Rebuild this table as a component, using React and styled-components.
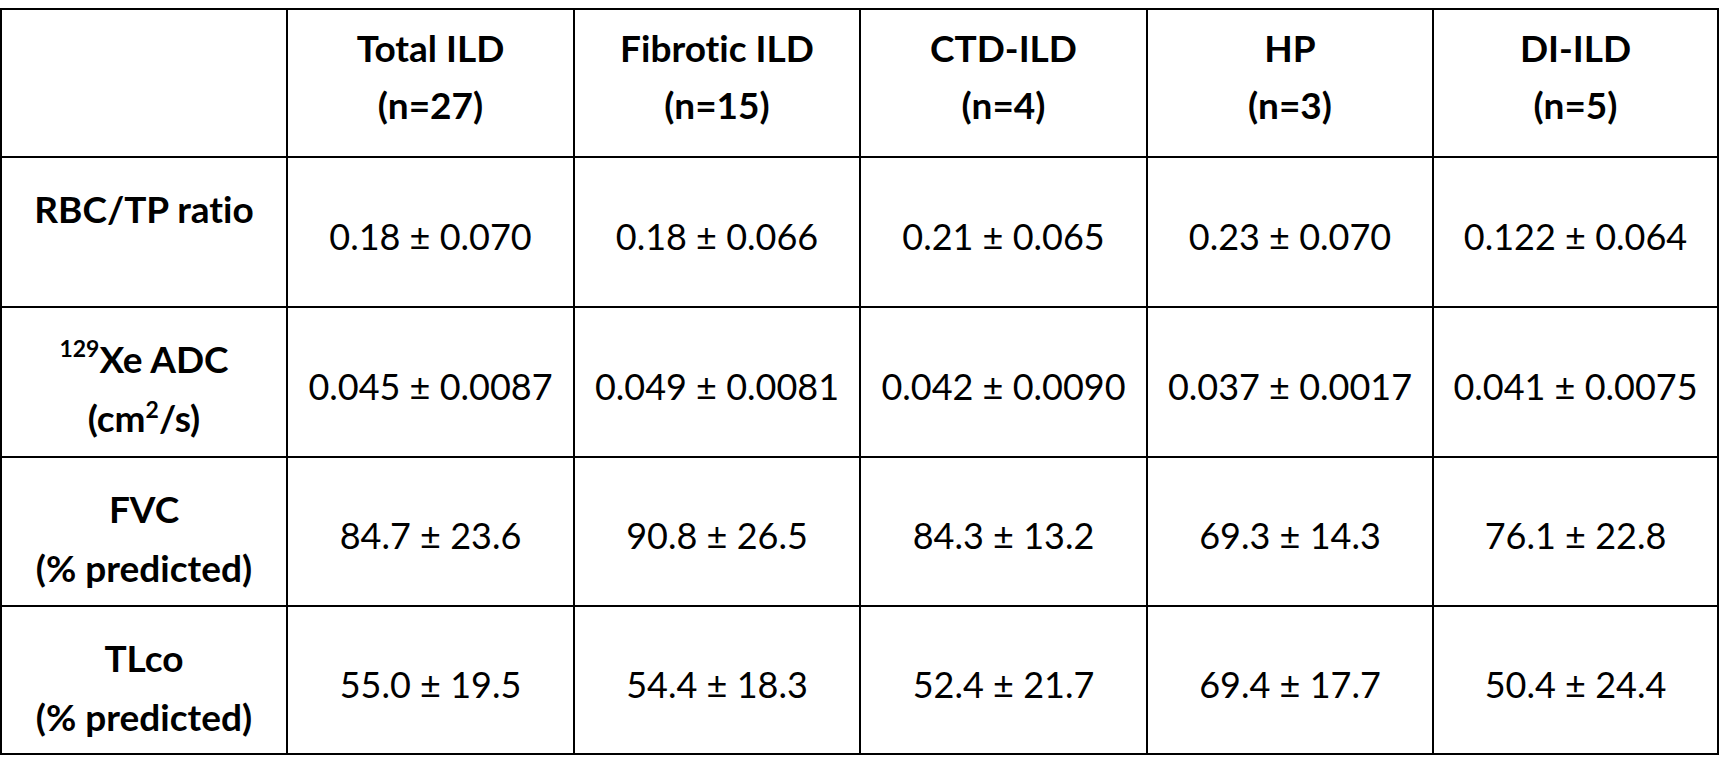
import React from "react";
import styled, { createGlobalStyle } from "styled-components";

const Global = createGlobalStyle`
  html, body {
    margin: 0;
    padding: 0;
    background: #ffffff;
  }
  body {
    font-family: Lato, "Open Sans", "Liberation Sans", sans-serif;
    font-variant-ligatures: none;
    color: #000;
  }
`;

const Page = styled.div`
  padding-top: 8px;
  background: #fff;
`;

const Grid = styled.div`
  display: grid;
  width: fit-content;
  grid-template-columns: 284px 285px 284px 285px 284px 283px;
  grid-template-rows: 146px 148px 148px 147px 146px;
  gap: 2px;
  padding: 2px;
  background: #000;
`;

const Cell = styled.div`
  background: #fff;
  display: flex;
  flex-direction: column;
  align-items: center;
  text-align: center;
  box-sizing: border-box;
`;

const HeadCell = styled(Cell)`
  justify-content: flex-start;
  padding-top: 9px;
  font-weight: 700;
  font-size: 37px;
  line-height: 57px;
`;

const LabelCell = styled(Cell)`
  justify-content: flex-start;
  padding-top: 21px;
  font-weight: 700;
  font-size: 37px;
  line-height: 59px;
`;

const ValueCell = styled(Cell)`
  justify-content: center;
  padding-top: 7px;
  font-size: 36px;
  font-weight: 400;
  white-space: nowrap;
`;

const Line = styled.span`
  display: block;
  white-space: nowrap;
`;

const Sup = styled.sup`
  font-size: 0.62em;
  line-height: 0;
  vertical-align: ${(p) => (p.$low ? "0.62em" : "0.7em")};
`;

const headers = [
  ["Total ILD", "(n=27)"],
  ["Fibrotic ILD", "(n=15)"],
  ["CTD-ILD", "(n=4)"],
  ["HP", "(n=3)"],
  ["DI-ILD", "(n=5)"],
];

const rows = [
  {
    label: [<React.Fragment key="a">RBC/TP ratio</React.Fragment>],
    values: ["0.18 ± 0.070", "0.18 ± 0.066", "0.21 ± 0.065", "0.23 ± 0.070", "0.122 ± 0.064"],
  },
  {
    label: [
      <React.Fragment key="a">
        <Sup>129</Sup>Xe ADC
      </React.Fragment>,
      <React.Fragment key="b">
        (cm<Sup $low>2</Sup>/s)
      </React.Fragment>,
    ],
    values: ["0.045 ± 0.0087", "0.049 ± 0.0081", "0.042 ± 0.0090", "0.037 ± 0.0017", "0.041 ± 0.0075"],
  },
  {
    label: ["FVC", "(% predicted)"],
    values: ["84.7 ± 23.6", "90.8 ± 26.5", "84.3 ± 13.2", "69.3 ± 14.3", "76.1 ± 22.8"],
  },
  {
    label: ["TLco", "(% predicted)"],
    values: ["55.0 ± 19.5", "54.4 ± 18.3", "52.4 ± 21.7", "69.4 ± 17.7", "50.4 ± 24.4"],
  },
];

export default function App() {
  return (
    <>
      <Global />
      <Page>
        <Grid>
          <HeadCell />
          {headers.map(([a, b]) => (
            <HeadCell key={a}>
              <Line>{a}</Line>
              <Line>{b}</Line>
            </HeadCell>
          ))}
          {rows.map((r, i) => (
            <React.Fragment key={i}>
              <LabelCell>
                {r.label.map((l, j) => (
                  <Line key={j}>{l}</Line>
                ))}
              </LabelCell>
              {r.values.map((v, j) => (
                <ValueCell key={j}>{v}</ValueCell>
              ))}
            </React.Fragment>
          ))}
        </Grid>
      </Page>
    </>
  );
}
